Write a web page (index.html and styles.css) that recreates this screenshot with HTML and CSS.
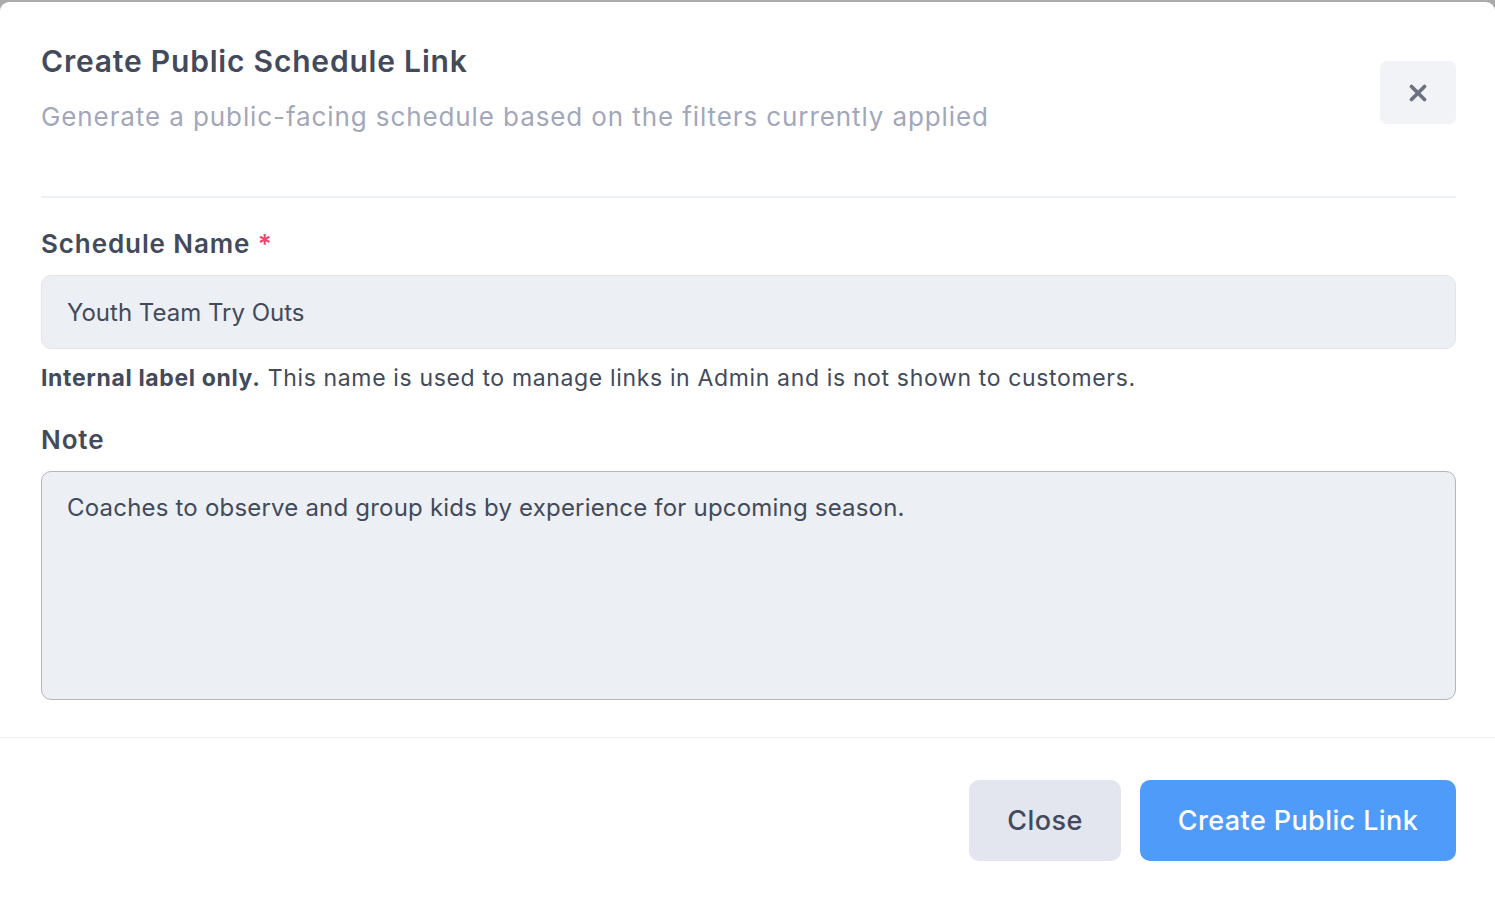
FILE: index.html
```html
<!DOCTYPE html>
<html lang="en">
<head>
    <meta charset="UTF-8">
    <meta name="viewport" content="width=device-width, initial-scale=1.0">
    <title>Create Public Schedule Link</title>
    <link rel="stylesheet" href="styles.css">
</head>
<body>

    <div class="modal">
        <header class="modal-header">
            <div class="heading">
                <h1>Create Public Schedule Link</h1>
                <p class="subtitle">Generate a public-facing schedule based on the filters currently applied</p>
            </div>
            <button type="button" class="icon-btn" aria-label="Close">
                <svg width="20" height="20" viewBox="0 0 20 20">
                    <path d="M3.5 3.5 L16.5 16.5 M16.5 3.5 L3.5 16.5" stroke="currentColor" stroke-width="3.8" stroke-linecap="round"/>
                </svg>
            </button>
        </header>

        <form class="modal-body">
            <label for="name">Schedule Name <span class="req">*</span></label>
            <input type="text" id="name" name="name" value="Youth Team Try Outs">
            <p class="hint"><strong>Internal label only.</strong> This name is used to manage links in Admin and is not shown to customers.</p>

            <label for="note">Note</label>
            <textarea id="note" name="note">Coaches to observe and group kids by experience for upcoming season.</textarea>
        </form>

        <footer class="modal-footer">
            <button type="button" class="btn btn-light">Close</button>
            <button type="submit" class="btn btn-primary">Create Public Link</button>
        </footer>
    </div>

</body>
</html>
```

FILE: styles.css
```css
:root {
    --text-main: #424a5b;
    --text-muted: #a2a7ba;
    --field-bg: #eceff3;
    --line: #edf0f3;
    --blue: #4f9bfa;
}

* { box-sizing: border-box; margin: 0; padding: 0; }
body { background: #ababab; font-family: Inter, "Open Sans", sans-serif; color: var(--text-main); }

.modal { margin-top: 2px; background: #ffffff; border-radius: 9px 9px 0 0; min-height: calc(100vh - 2px); }

.modal-header { margin: 0 39px 0 41px; padding: 41px 0 61px; border-bottom: 2px solid var(--line); display: flex; justify-content: space-between; align-items: flex-start; }
.modal-header h1 { font-size: 30px; font-weight: 600; line-height: 36px; letter-spacing: 0.8px; }
.subtitle { font-size: 26px; line-height: 36px; margin-top: 20px; color: var(--text-muted); letter-spacing: 0.9px; }

.icon-btn { width: 76px; height: 63px; margin-top: 18px; border: none; border-radius: 7px; background: #f1f3f6; color: #6e7181; display: flex; align-items: center; justify-content: center; cursor: pointer; }

.modal-body { padding: 29px 39px 37px 41px; display: flex; flex-direction: column; border-bottom: 1px solid #efefef; }
label { font-size: 26px; font-weight: 600; line-height: 34px; margin-bottom: 14px; letter-spacing: 0.9px; }
.req { color: #e8486b; }

input, textarea { width: 100%; background: var(--field-bg); border: 1px solid #e2e5eb; border-radius: 10px; font-family: inherit; font-size: 24px; color: var(--text-main); padding: 0 25px; }
input { height: 74px; }
textarea { height: 229px; padding-top: 20px; border-color: #b3b6bf; resize: none; line-height: 32px; letter-spacing: 0.2px; }

.hint { font-size: 23px; line-height: 34px; margin: 12px 0 28px; letter-spacing: 0.65px; }
.hint strong { font-weight: 700; }

.modal-footer { display: flex; justify-content: flex-end; gap: 19px; padding: 42px 39px 40px 41px; }
.btn { height: 81px; border: none; border-radius: 10px; font-family: inherit; font-size: 27px; font-weight: 500; letter-spacing: 0.4px; cursor: pointer; }
.btn-light { width: 152px; background: #e3e6ef; color: var(--text-main); }
.btn-primary { width: 316px; background: var(--blue); color: #ffffff; }
```
